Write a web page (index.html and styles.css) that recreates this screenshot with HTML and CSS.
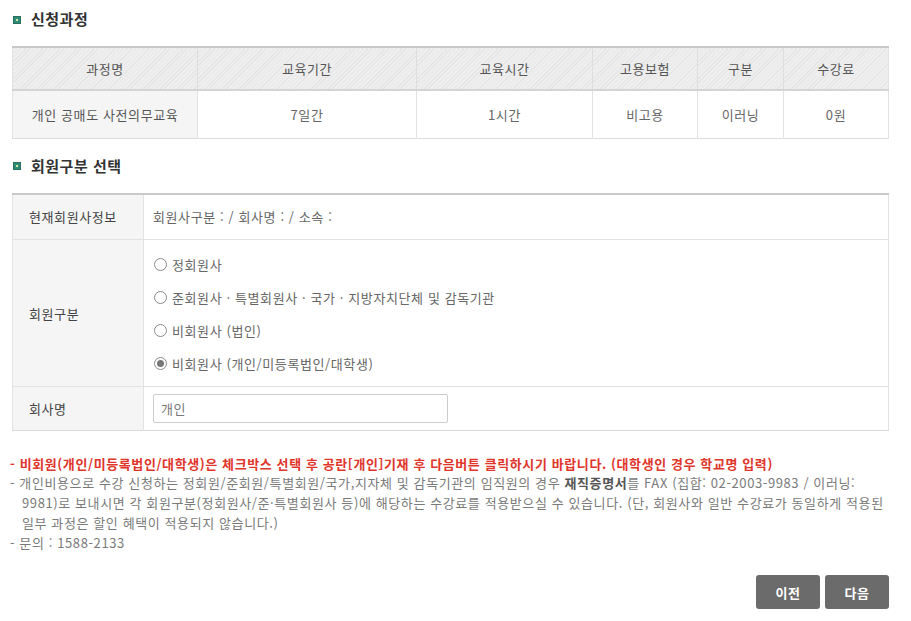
FILE: index.html
```html
<!DOCTYPE html>
<html lang="ko">
<head>
<meta charset="utf-8">
<title>신청과정</title>
<link rel="stylesheet" href="styles.css">
</head>
<body>
<div class="page">
  <h2 class="sec-title first"><span class="bullet"></span>신청과정</h2>
  <table class="course">
    <colgroup>
      <col style="width:185px"><col style="width:219px"><col style="width:176px"><col style="width:105px"><col style="width:86px"><col>
    </colgroup>
    <thead>
      <tr><th>과정명</th><th>교육기간</th><th>교육시간</th><th>고용보험</th><th>구분</th><th>수강료</th></tr>
    </thead>
    <tbody>
      <tr><td class="name">개인 공매도 사전의무교육</td><td>7일간</td><td>1시간</td><td>비고용</td><td>이러닝</td><td>0원</td></tr>
    </tbody>
  </table>

  <h2 class="sec-title second"><span class="bullet"></span>회원구분 선택</h2>
  <table class="member">
    <colgroup><col style="width:131px"><col></colgroup>
    <tbody>
      <tr class="r-info"><th>현재회원사정보</th><td>회원사구분 : / 회사명 : / 소속 :</td></tr>
      <tr class="r-type"><th>회원구분</th>
        <td>
          <label class="radio"><input type="radio" name="mtype"><span>정회원사</span></label>
          <label class="radio"><input type="radio" name="mtype"><span>준회원사 · 특별회원사 · 국가 · 지방자치단체 및 감독기관</span></label>
          <label class="radio"><input type="radio" name="mtype"><span>비회원사 (법인)</span></label>
          <label class="radio"><input type="radio" name="mtype" checked><span>비회원사 (개인/미등록법인/대학생)</span></label>
        </td>
      </tr>
      <tr class="r-company"><th>회사명</th><td><input class="text-input" type="text" value="개인"></td></tr>
    </tbody>
  </table>

  <div class="notes">
    <p class="note red">- 비회원(개인/미등록법인/대학생)은 체크박스 선택 후 공란[개인]기재 후 다음버튼 클릭하시기 바랍니다. (대학생인 경우 학교명 입력)</p>
    <p class="note">- 개인비용으로 수강 신청하는 정회원/준회원/특별회원/국가,지자체 및 감독기관의 임직원의 경우 <b>재직증명서</b>를 FAX (집합: 02-2003-9983 / 이러닝:<br>9981)로 보내시면 각 회원구분(정회원사/준·특별회원사 등)에 해당하는 수강료를 적용받으실 수 있습니다. (단, 회원사와 일반 수강료가 동일하게 적용된<br>일부 과정은 할인 혜택이 적용되지 않습니다.)</p>
    <p class="note">- 문의 : 1588-2133</p>
  </div>

  <div class="btns">
    <button class="btn" type="button">이전</button>
    <button class="btn" type="button">다음</button>
  </div>
</div>
</body>
</html>
```

FILE: styles.css
```css
* { box-sizing: border-box; }
html, body { margin: 0; padding: 0; background: #fff; }
body {
  font-family: "Noto Sans CJK KR", "Noto Sans", sans-serif;
  font-size: 13px;
  letter-spacing: 0.6px;
  color: #555;
}
.page {
  width: 911px;
  padding: 9px 22px 0 12px;
}
.sec-title {
  margin: 0;
  font-size: 15px;
  line-height: 20px;
  font-weight: bold;
  letter-spacing: 0.5px;
  color: #333;
  display: flex;
  align-items: center;
}
.sec-title.first { margin-bottom: 17px; }
.sec-title.second { margin-top: 17px; margin-bottom: 17px; }
.bullet {
  width: 8px;
  height: 8px;
  margin: 1px 10px 0 1px;
  background: #2f8a76;
  border: 1px solid #276f5f;
  position: relative;
}
.bullet::after {
  content: "";
  position: absolute;
  left: 2px; top: 2px;
  width: 2px; height: 2px;
  background: #cfe8a8;
}
table {
  width: 877px;
  border-collapse: collapse;
  table-layout: fixed;
}
.course { border-top: 2px solid #c9c9c9; border-bottom: 1px solid #dcdcdc; }
.course th {
  height: 43px;
  font-weight: normal;
  color: #555;
  background-color: #ebebeb;
  background-image: repeating-linear-gradient(135deg, #e4e4e4 0 1px, #efefef 1px 3px);
  border-left: 1px solid #dedede;
  border-bottom: 2px solid #d4d4d4;
  text-align: center;
  padding: 0;
}
.course td {
  height: 48px;
  text-align: center;
  color: #666;
  border-left: 1px solid #e2e2e2;
  padding: 0;
}
.course th:first-child, .course td:first-child { border-left: 1px solid #e2e2e2; }
.course td:last-child, .course th:last-child { border-right: 1px solid #e2e2e2; }
.course td.name { background: #f5f5f5; color: #555; }

.member { border-top: 2px solid #c9c9c9; border-bottom: 1px solid #d9d9d9; border-left: 1px solid #e2e2e2; border-right: 1px solid #e2e2e2; }
.member th {
  background: #f5f5f5;
  text-align: left;
  font-weight: normal;
  color: #444;
  padding: 0 0 0 16px;
  border-right: 1px solid #e2e2e2;
}
.member td { padding: 0 0 0 9px; color: #666; }
.member tr + tr th, .member tr + tr td { border-top: 1px solid #e2e2e2; }
.r-info th, .r-info td { height: 46px; }
.r-type td { padding-top: 8px; padding-bottom: 6px; }
.r-company th, .r-company td { height: 44px; }
.radio {
  display: flex;
  align-items: center;
  height: 33px;
  color: #666;
}
.radio input {
  appearance: none;
  -webkit-appearance: none;
  width: 13px;
  height: 13px;
  margin: 0 5px 0 1px;
  border: 1px solid #8a8a8a;
  border-radius: 50%;
  background: #fff;
  position: relative;
}
.radio input:checked::after {
  content: "";
  position: absolute;
  left: 2px; top: 2px;
  width: 7px; height: 7px;
  border-radius: 50%;
  background: #777;
}
.text-input {
  width: 295px;
  height: 29px;
  border: 1px solid #cccccc;
  border-radius: 2px;
  padding: 0 7px;
  font-family: inherit;
  font-size: 13px;
  letter-spacing: 0.6px;
  color: #777;
  outline: none;
}
.notes { margin-top: 24px; }
.note {
  margin: 0;
  padding-left: 12px;
  text-indent: -12px;
  line-height: 20px;
  color: #7a7a7a;
  margin-left: -2px;
}
.note b { color: #555; }
.note.red {
  color: #e0352b;
  font-weight: bold;
  line-height: 18px;
}
.btns {
  display: flex;
  justify-content: flex-end;
  gap: 5px;
  margin-top: 22px;
}
.btn {
  width: 64px;
  height: 34px;
  border: none;
  border-radius: 3px;
  background: #6b6b6b;
  color: #fff;
  font-family: inherit;
  font-size: 13px;
  font-weight: bold;
  letter-spacing: 0.6px;
  padding: 0;
}
```
